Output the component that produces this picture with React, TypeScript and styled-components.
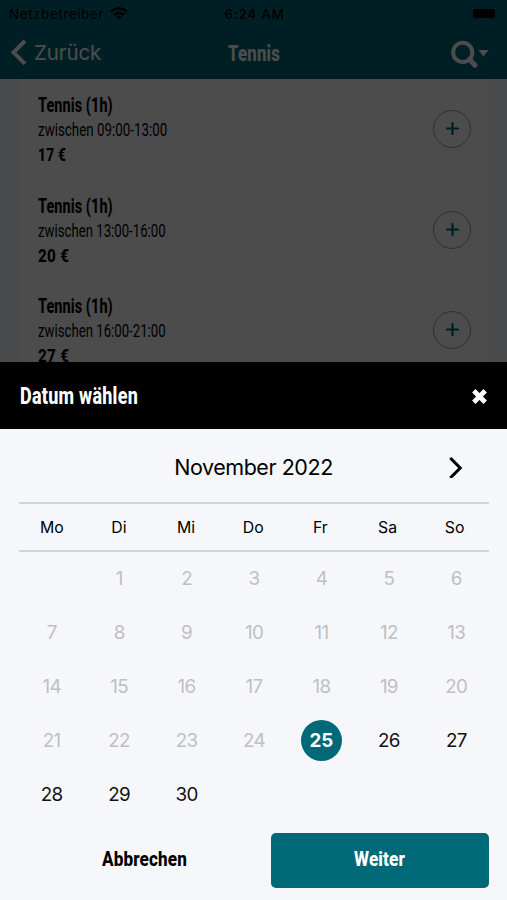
import React from "react";
import styled, { createGlobalStyle } from "styled-components";

const TEAL = "#006978";
const PAPER = "#f5f7fb";

const GlobalStyle = createGlobalStyle`
  *, *::before, *::after { box-sizing: border-box; }
  body { margin: 0; background: ${PAPER}; font-family: Inter, sans-serif; color: #000; }
  button { border: 0; padding: 0; background: none; font: inherit; color: inherit; }
`;

const Screen = styled.div`
  position: relative;
  width: 507px;
  height: 900px;
  overflow: hidden;
  background: ${PAPER};
`;

const Head = styled.header`
  height: 79px;
  background: ${TEAL};
`;

const StatusBar = styled.div`
  display: grid;
  grid-template-columns: 1fr auto 1fr;
  align-items: center;
  height: 27px;
  padding: 0 12px 0 9px;
  font-size: 13.5px;
  letter-spacing: 0.55px;
`;

const Carrier = styled.div`
  display: flex;
  align-items: center;
  gap: 6px;
`;

const Clock = styled.div`
  padding-left: 5px;
  font-weight: 500;
  letter-spacing: 0.7px;
`;

const Battery = styled.div`
  justify-self: end;
  width: 22px;
  height: 9px;
  border-radius: 2px;
  background: #000;
`;

const NavBar = styled.nav`
  display: grid;
  grid-template-columns: 1fr auto 1fr;
  align-items: center;
  height: 52px;
  padding: 0 18px 0 11px;
  color: #fff;
`;

const Back = styled.button`
  display: flex;
  align-items: center;
  gap: 7px;
  padding-bottom: 1px;
  font-size: 20.5px;
  letter-spacing: -0.1px;
`;

const Title = styled.div`
  padding-left: 7px;
`;

const Search = styled.button`
  justify-self: end;
  display: flex;
  padding-top: 2px;
`;

const Condensed = styled.span<{ $w: number; $size: number; $k: number; $weight?: number; $gap?: number }>`
  display: block;
  width: ${(p) => p.$w}px;
  font-family: Roboto, sans-serif;
  font-size: ${(p) => p.$size}px;
  font-weight: ${(p) => p.$weight ?? 800};
  letter-spacing: ${(p) => p.$gap ?? 0}px;
  line-height: 25px;
  white-space: nowrap;
  transform: scaleX(${(p) => p.$k});
  transform-origin: left center;
`;

const List = styled.main`
  margin: 0 18px;
  height: 283px;
  padding-top: 14px;
  overflow: hidden;
  background: #fff;
`;

const Item = styled.div`
  display: flex;
  justify-content: space-between;
  align-items: flex-start;
  height: 100.6px;
  padding: 0 18px 0 20px;
`;

const Info = styled.div`
  display: grid;
  grid-template-rows: 25px 24px 25px;
`;

const Add = styled.button`
  display: grid;
  place-items: center;
  width: 38px;
  height: 38px;
  margin-top: 17px;
  padding-bottom: 1px;
  border: 1px solid #9aa0a0;
  border-radius: 50%;
`;

const Backdrop = styled.div`
  position: absolute;
  inset: 0;
  background: rgba(0, 0, 0, 0.7);
`;

const Sheet = styled.section`
  position: absolute;
  left: 0;
  right: 0;
  bottom: 0;
  height: 538px;
  background: ${PAPER};
`;

const SheetHead = styled.div`
  display: flex;
  align-items: center;
  justify-content: space-between;
  height: 67px;
  padding: 1px 20px 0;
  background: #000;
  color: #fff;
`;

const Close = styled.button`
  display: flex;
`;

const Calendar = styled.div`
  padding: 0 18px;
`;

const Month = styled.div`
  display: grid;
  grid-template-columns: 67px 1fr 67px;
  align-items: center;
  justify-items: center;
  height: 73px;
  padding-top: 2px;
  font-size: 21.5px;
  letter-spacing: -0.45px;
`;

const Next = styled.button`
  display: flex;
`;

const Weekdays = styled.div`
  display: grid;
  grid-template-columns: repeat(7, 1fr);
  place-items: center;
  height: 50px;
  margin-left: 1px;
  border-top: 2px solid #d3d5da;
  border-bottom: 2px solid #d3d5da;
  font-size: 15.8px;
  text-indent: -1.5px;
`;

const Days = styled.div`
  display: grid;
  grid-template-columns: repeat(7, 1fr);
  grid-auto-rows: 54px;
  place-items: center;
  margin: -1px -1px 0 0;
`;

const Day = styled.div<{ $state: "past" | "open" | "picked" }>`
  display: grid;
  place-items: center;
  width: 41px;
  height: 41px;
  border-radius: 50%;
  font-size: 18.8px;
  letter-spacing: ${(p) => (p.$state === "picked" ? 0 : -0.7)}px;
  font-weight: ${(p) => (p.$state === "picked" ? 700 : 400)};
  color: ${(p) => ({ past: "#bfc0c2", open: "#111", picked: "#fff" })[p.$state]};
  background: ${(p) => (p.$state === "picked" ? TEAL : "transparent")};
`;

const Actions = styled.div`
  display: grid;
  grid-template-columns: 253px 218px;
  height: 55px;
  margin: 12px 18px 0;
`;

const Action = styled.button<{ $primary?: boolean }>`
  display: flex;
  align-items: center;
  justify-content: center;
  padding-bottom: 3px;
  border-radius: 5px;
  color: ${(p) => (p.$primary ? "#fff" : "#000")};
  background: ${(p) => (p.$primary ? TEAL : "transparent")};
`;

const courts = [
  { hours: "zwischen 09:00-13:00", w: 130, price: "17 €" },
  { hours: "zwischen 13:00-16:00", w: 128, price: "20 €" },
  { hours: "zwischen 16:00-21:00", w: 128, price: "27 €" },
];

const weekdays = ["Mo", "Di", "Mi", "Do", "Fr", "Sa", "So"];
const days = Array.from({ length: 30 }, (_, i) => i + 1);

export default function App() {
  return (
    <>
      <GlobalStyle />
      <Screen>
        <Head>
          <StatusBar>
            <Carrier>
              Netzbetreiber
              <svg width="18" height="13" viewBox="0 0 18 13" fill="none" stroke="#000" strokeWidth="2.5">
                <path d="M1 4.6a11.6 11.6 0 0 1 16 0M4 7.9a7.2 7.2 0 0 1 10 0" />
                <path d="M6.4 10a3.9 3.9 0 0 1 5.2 0L9 12.7z" fill="#000" stroke="none" />
              </svg>
            </Carrier>
            <Clock>6:24 AM</Clock>
            <Battery />
          </StatusBar>
          <NavBar>
            <Back>
              <svg width="16" height="27" viewBox="0 0 16 27" fill="none" stroke="#fff" strokeWidth="4">
                <path d="M14 2 2.5 13.3 14 24.8" />
              </svg>
              Zurück
            </Back>
            <Title>
              <Condensed $w={52} $size={22} $k={0.76} $gap={0.3}>Tennis</Condensed>
            </Title>
            <Search>
              <svg width="39" height="29" viewBox="0 0 39 29" fill="none" stroke="#fff">
                <circle cx="12.7" cy="12.4" r="9.6" strokeWidth="3.9" />
                <path d="m19.5 19.5 5.5 5.8" strokeWidth="5" strokeLinecap="round" />
                <path d="M28.5 10h10l-5 6.5z" fill="#fff" stroke="none" />
              </svg>
            </Search>
          </NavBar>
        </Head>
        <List>
          {courts.map((c) => (
            <Item key={c.hours}>
              <Info>
                <Condensed $w={75} $size={19.5} $k={0.74} $gap={0.1}>Tennis (1h)</Condensed>
                <Condensed $w={c.w} $size={17.5} $k={c.w === 130 ? 0.764 : 0.754} $weight={400}>{c.hours}</Condensed>
                <Condensed $w={33} $size={19} $k={c.w === 130 ? 0.72 : 0.8} $gap={0.4}>{c.price}</Condensed>
              </Info>
              <Add>
                <svg width="13" height="13" viewBox="0 0 13 13" stroke={TEAL} strokeWidth="2.2" strokeLinecap="round">
                  <path d="M6.5 1v11M1 6.5h11" />
                </svg>
              </Add>
            </Item>
          ))}
        </List>
        <Backdrop />
        <Sheet>
          <SheetHead>
            <Condensed $w={119} $size={23} $k={0.78} $gap={0.35}>Datum wählen</Condensed>
            <Close>
              <svg width="15" height="15" viewBox="0 0 15 15" stroke="#fff" strokeWidth="4.8" strokeLinejoin="round">
                <path d="m1.8 1.8 11.4 11.4M13.2 1.8 1.8 13.2" />
              </svg>
            </Close>
          </SheetHead>
          <Calendar>
            <Month>
              <span />
              <span>November 2022</span>
              <Next>
                <svg width="14" height="22" viewBox="0 0 14 22" fill="none" stroke="#000" strokeWidth="3" strokeLinecap="round">
                  <path d="m2.2 2.9 9 9.1-9 9.1" />
                </svg>
              </Next>
            </Month>
            <Weekdays>
              {weekdays.map((d) => <span key={d}>{d}</span>)}
            </Weekdays>
            <Days>
              <span />
              {days.map((d) => (
                <Day key={d} $state={d < 25 ? "past" : d === 25 ? "picked" : "open"}>{d}</Day>
              ))}
            </Days>
          </Calendar>
          <Actions>
            <Action><Condensed $w={85} $size={21} $k={0.815} $gap={0.15}>Abbrechen</Condensed></Action>
            <Action $primary><Condensed $w={52} $size={21} $k={0.82} $gap={0.15}>Weiter</Condensed></Action>
          </Actions>
        </Sheet>
      </Screen>
    </>
  );
}
